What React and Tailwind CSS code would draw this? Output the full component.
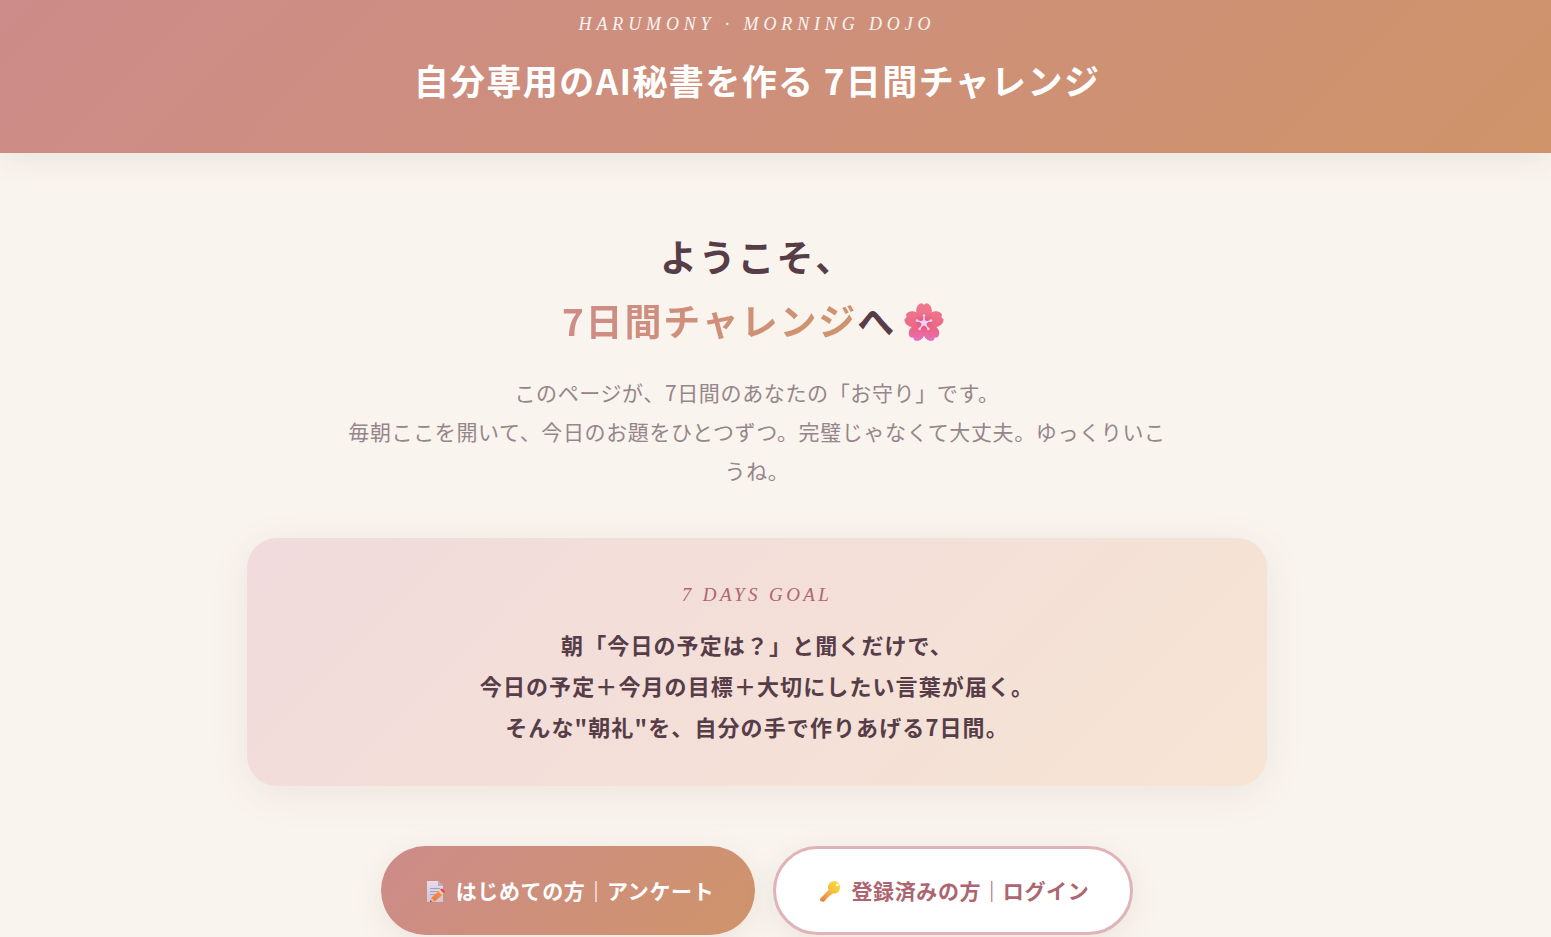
const petals = [0, 72, 144, 216, 288];

function Blossom() {
  return (
    <svg viewBox="0 -2 50 50" className="mx-1 inline-block size-12 align-middle" aria-hidden="true">
      <defs>
        <linearGradient id="bloom" x1="0" y1="5" x2="0" y2="46" gradientUnits="userSpaceOnUse">
          <stop offset="0" stopColor="#ee7b8e" />
          <stop offset="0.7" stopColor="#ec6688" />
          <stop offset="1" stopColor="#e56fd0" />
        </linearGradient>
        <clipPath id="petals">
          {petals.map((angle) => (
            <path
              key={angle}
              transform={`rotate(${angle} 25 26)`}
              d="M25 27C20 22.500 16.500 17 16.900 12.500C17.200 8.500 19.800 5.800 22.300 5.600C23.500 5.500 24 6.800 25 6.800C26 6.800 26.500 5.500 27.700 5.600C30.200 5.800 32.800 8.500 33.100 12.500C33.500 17 30 22.500 25 27Z"
            />
          ))}
          <circle cx="25" cy="26" r="9.500" />
        </clipPath>
        <radialGradient id="heart" cx="25" cy="26" r="12" gradientUnits="userSpaceOnUse">
          <stop offset="0" stopColor="#d83a66" stopOpacity="0.6" />
          <stop offset="1" stopColor="#e85878" stopOpacity="0" />
        </radialGradient>
      </defs>
      <rect width="50" height="50" fill="url(#bloom)" clipPath="url(#petals)" />
      <circle cx="25" cy="26" r="12" fill="url(#heart)" />
      {petals.map((angle) => (
        <g key={angle} transform={`rotate(${angle} 25 26)`} fill="#eed0f8">
          <rect x="24.300" y="18.500" width="1.400" height="6" />
          <circle cx="25" cy="18.300" r="1.400" />
        </g>
      ))}
      <path d="M25 21L26.700 23.800L29.900 24.400L27.700 26.900L28 30.100L25 28.800L22 30.100L22.300 26.900L20.100 24.400L23.300 23.800Z" fill="#eed0f8" />
    </svg>
  );
}

function Memo() {
  return (
    <svg viewBox="0 0 28 28" className="size-7 shrink-0" aria-hidden="true">
      <defs>
        <linearGradient id="sheet" x1="0" y1="0" x2="0" y2="1">
          <stop offset="0" stopColor="#e6dbe8" />
          <stop offset="1" stopColor="#cfc5de" />
        </linearGradient>
        <linearGradient id="pencil" x1="1" y1="0" x2="0" y2="1">
          <stop offset="0" stopColor="#f9a03c" />
          <stop offset="1" stopColor="#e8703c" />
        </linearGradient>
      </defs>
      <path d="M5 4H16L21 9V25H5Z" fill="url(#sheet)" />
      <path d="M16 4L21 9H16Z" fill="#b8adc6" />
      <path d="M8 11.500H18M8 14.500H16M8 17.500H13" stroke="#a99fb9" strokeWidth="1.200" />
      <path d="M8 25L9.500 20.800L17.800 13L21.600 17L13 24.200Z" fill="url(#pencil)" />
      <path d="M8 25L9.500 20.800L13 24.200Z" fill="#e9b596" />
      <path d="M8 25L8.600 23.200L9.800 24.500Z" fill="#4b3550" />
      <path d="M16.500 14.200L18 12.800L21.800 16.600L20.300 18Z" fill="#e3d5e4" />
      <path d="M18 12.800L19.200 11.800Q20 11.200 20.800 12L22.700 14Q23.400 14.900 22.800 15.600L21.800 16.600Z" fill="#ee4b4b" />
    </svg>
  );
}

function Key() {
  return (
    <svg viewBox="0 0 28 28" className="size-7 shrink-0" aria-hidden="true">
      <defs>
        <linearGradient id="brass" x1="1" y1="0" x2="0" y2="1">
          <stop offset="0" stopColor="#fbe33f" />
          <stop offset="0.5" stopColor="#f5b83f" />
          <stop offset="1" stopColor="#e07b4c" />
        </linearGradient>
      </defs>
      <path
        fillRule="evenodd"
        d="M17.800 4A6.300 6.300 0 1 1 15.800 16.500L13.700 18.300L12.600 18.400L12.300 19.600L11 19.800L10.800 21L9.500 21.300L9.300 22.500L7.300 24.400Q6.500 25.100 5.600 24.800L3.700 24Q3 23.600 3.100 22.800L3.300 21.400L11.600 13A6.300 6.300 0 0 1 17.800 4ZM20.300 6.700A1.300 1.300 0 1 0 20.300 9.300A1.300 1.300 0 1 0 20.300 6.700Z"
        fill="url(#brass)"
      />
    </svg>
  );
}

const buttonBase =
  "flex h-[89px] items-center gap-[6px] rounded-full px-[41px] text-[21px] font-bold tracking-[0.03em] whitespace-nowrap shadow-[0_8px_32px_rgba(90,60,75,0.08)]";

export default function App() {
  return (
    <div className="min-h-screen bg-[#f9f4ed] font-['Noto_Sans_CJK_JP',sans-serif] text-[#573d48]">
      <header className="bg-linear-135 from-[#cd8b89] to-[#cf946a] pt-[10px] pr-[37px] pb-[47px] text-center text-white shadow-[0_4px_32px_rgba(90,60,75,0.09)]">
        <p className="font-['Liberation_Serif',serif] text-lg leading-7 tracking-[0.27em] text-white/90 italic">
          HARUMONY · MORNING DOJO
        </p>
        <p className="mt-4 text-[35px] leading-[52px] font-bold tracking-[0.04em]">
          自分専用のAI秘書を作る 7日間チャレンジ
        </p>
      </header>

      <main className="flex flex-col items-center pt-[71px] pr-[37px] text-center">
        <h1 className="text-[37px] leading-[64px] font-bold tracking-[0.05em]">
          <span className="block">ようこそ、</span>
          <span className="flex h-16 items-center justify-center">
            <span className="bg-linear-135 from-[#cd8b89] to-[#cf946a] bg-clip-text text-transparent">
              7日間チャレンジ
            </span>
            へ
            <Blossom />
          </span>
        </h1>

        <p className="mt-[21px] max-w-[830px] text-[21px] leading-[39px] tracking-[0.03em] text-[#96858b]">
          このページが、7日間のあなたの「お守り」です。
          <br />
          毎朝ここを開いて、今日のお題をひとつずつ。完璧じゃなくて大丈夫。ゆっくりいこうね。
        </p>

        <section className="mt-12 w-full max-w-[1020px] rounded-[30px] bg-linear-135 from-[#f1dbdc] to-[#f6e4d4] pt-[43px] pb-[39px] shadow-[0_8px_40px_rgba(90,60,75,0.08)]">
          <h2 className="font-['Liberation_Serif',serif] text-[19px] leading-7 tracking-[0.18em] text-[#b0656f] italic">
            7 DAYS GOAL
          </h2>
          <p className="mt-[15px] text-[22px] leading-[41px] font-bold tracking-[0.05em]">
            朝「今日の予定は？」と聞くだけで、
            <br />
            今日の予定＋今月の目標＋大切にしたい言葉が届く。
            <br />
            そんな"朝礼"を、自分の手で作りあげる7日間。
          </p>
        </section>

        <div className="mt-[60px] flex flex-wrap justify-center gap-[18px]">
          <button type="button" className={`${buttonBase} bg-linear-135 from-[#cd8b89] to-[#cf946a] text-white`}>
            <Memo />
            はじめての方｜アンケート
          </button>
          <button type="button" className={`${buttonBase} border-3 border-[#e0b3b8] bg-white text-[#ad666f]`}>
            <Key />
            登録済みの方｜ログイン
          </button>
        </div>
      </main>
    </div>
  );
}
